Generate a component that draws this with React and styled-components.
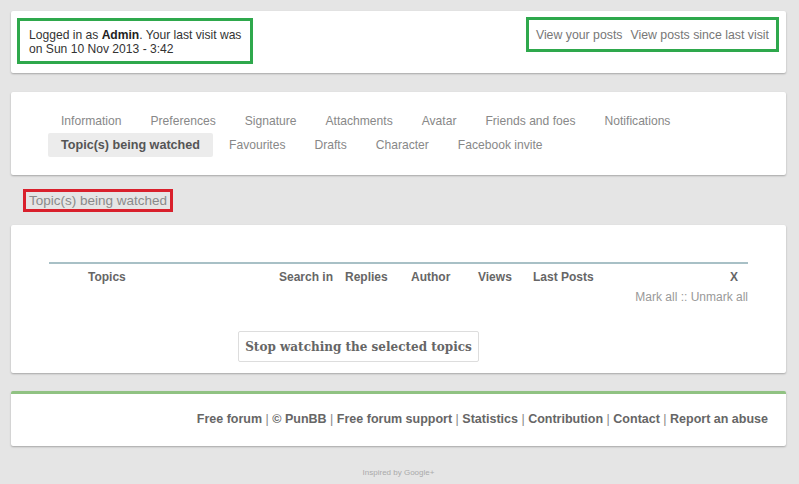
import React from 'react';
import styled, { createGlobalStyle } from 'styled-components';

const GlobalStyle = createGlobalStyle`
  html, body {
    margin: 0;
    padding: 0;
    background: #e5e5e5;
    font-family: "Liberation Sans", Arial, sans-serif;
  }
`;

const Page = styled.div`
  padding: 11px 13px 0 11px;
  display: flex;
  flex-direction: column;
`;

const Card = styled.div`
  background: #fff;
  border-radius: 2px;
  box-shadow: 0 1px 2px rgba(0, 0, 0, 0.28);
  margin-bottom: ${(p) => p.$mb || 0}px;
`;

const HeaderCard = styled(Card)`
  display: flex;
  justify-content: space-between;
  align-items: flex-start;
  padding: 7px 7px 9px 6px;
`;

const Marked = styled.div`
  border: 3px solid ${(p) => p.$color};
`;

const Welcome = styled(Marked)`
  padding: 7px 9px 5px 9px;
  font-size: 12.1px;
  line-height: 14px;
  color: #333;
  b { color: #222; }
`;

const QuickLinks = styled(Marked)`
  margin-top: -1px;
  padding: 8px 7px 7px 7px;
  font-size: 12.3px;
  line-height: 14px;
  color: #777;
  display: flex;
  gap: 8px;
`;

const NavCard = styled(Card)`
  padding: 17px 30px 18px 37px;
`;

const NavRow = styled.div`
  display: flex;
  gap: 3px;
`;

const NavItem = styled.span`
  height: 24px;
  line-height: 24px;
  padding: 0 13px;
  border-radius: 2px;
  font-size: ${(p) => (p.$active ? '12.6px' : '12.1px')};
  color: ${(p) => (p.$active ? '#555' : '#888')};
  font-weight: ${(p) => (p.$active ? 'bold' : 'normal')};
  background: ${(p) => (p.$active ? '#ececec' : 'transparent')};
  white-space: nowrap;
`;

const TitleWrap = styled.div`
  display: flex;
  padding: 0 0 13px 12px;
`;

const PageTitle = styled(Marked)`
  padding: 0 3px;
  font-size: 13.5px;
  line-height: 17px;
  color: #8a8a8a;
`;

const TableCard = styled(Card)`
  padding: 37px 38px 11px 38px;
`;

const HeadRow = styled.div`
  border-top: 2px solid #a8c0c6;
  display: grid;
  grid-template-columns: 230px 66px 66px 67px 55px 1fr 40px;
  height: 25px;
  align-items: center;
  font-size: 12px;
  font-weight: bold;
  color: #666;
`;

const HeadCell = styled.span`
  padding-left: ${(p) => p.$pl || 0}px;
  text-align: ${(p) => p.$align || 'left'};
  padding-right: ${(p) => p.$pr || 0}px;
`;

const MarkLine = styled.div`
  text-align: right;
  font-size: 12px;
  color: #999;
  margin-top: 1px;
`;

const ButtonRow = styled.div`
  display: flex;
  justify-content: center;
  margin-top: 27px;
  padding-right: 80px;
`;

const StopButton = styled.button`
  background: #fff;
  border: 1px solid #ddd;
  border-radius: 2px;
  height: 31px;
  padding: 0 6px;
  font-family: "DejaVu Serif", Georgia, serif;
  font-size: 12px;
  font-weight: bold;
  color: #666;
`;

const Footer = styled(Card)`
  border-top: 3px solid #90c282;
  height: 49px;
  padding: 0 18px 3px 0;
  display: flex;
  align-items: center;
  justify-content: flex-end;
  font-size: 12.5px;
  font-weight: bold;
  color: #666;
  white-space: pre;
`;

const Sep = styled.span`
  color: #888;
  font-weight: normal;
`;

const Credit = styled.div`
  text-align: center;
  font-size: 8px;
  color: #aaa;
  margin-top: 22px;
`;

const row1 = ['Information', 'Preferences', 'Signature', 'Attachments', 'Avatar', 'Friends and foes', 'Notifications'];
const row2 = ['Topic(s) being watched', 'Favourites', 'Drafts', 'Character', 'Facebook invite'];
const footerLinks = ['Free forum', '© PunBB', 'Free forum support', 'Statistics', 'Contribution', 'Contact', 'Report an abuse'];

export default function App() {
  return (
    <>
      <GlobalStyle />
      <Page>
        <HeaderCard $mb={19}>
          <Welcome $color="#2ea84c">
            Logged in as <b>Admin</b>. Your last visit was
            <br />
            on Sun 10 Nov 2013 - 3:42
          </Welcome>
          <QuickLinks $color="#2ea84c">
            <span>View your posts</span>
            <span>View posts since last visit</span>
          </QuickLinks>
        </HeaderCard>

        <NavCard $mb={14}>
          <NavRow>
            {row1.map((t) => (
              <NavItem key={t}>{t}</NavItem>
            ))}
          </NavRow>
          <NavRow>
            {row2.map((t, i) => (
              <NavItem key={t} $active={i === 0}>{t}</NavItem>
            ))}
          </NavRow>
        </NavCard>

        <TitleWrap>
          <PageTitle $color="#d9202c">Topic(s) being watched</PageTitle>
        </TitleWrap>

        <TableCard $mb={18}>
          <HeadRow>
            <HeadCell $pl={39}>Topics</HeadCell>
            <HeadCell>Search in</HeadCell>
            <HeadCell>Replies</HeadCell>
            <HeadCell>Author</HeadCell>
            <HeadCell>Views</HeadCell>
            <HeadCell>Last Posts</HeadCell>
            <HeadCell $align="right" $pr={10}>X</HeadCell>
          </HeadRow>
          <MarkLine>Mark all :: Unmark all</MarkLine>
          <ButtonRow>
            <StopButton>Stop watching the selected topics</StopButton>
          </ButtonRow>
        </TableCard>

        <Footer>
          {footerLinks.map((t, i) => (
            <React.Fragment key={t}>
              {i > 0 && <Sep> | </Sep>}
              <span>{t}</span>
            </React.Fragment>
          ))}
        </Footer>

        <Credit>Inspired by Google+</Credit>
      </Page>
    </>
  );
}
